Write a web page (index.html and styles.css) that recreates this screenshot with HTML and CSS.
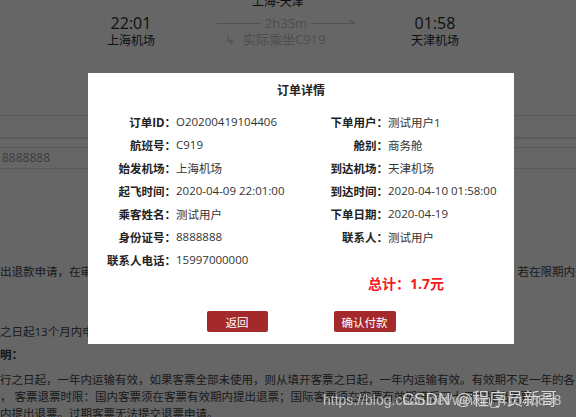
FILE: index.html
```html
<!DOCTYPE html>
<html lang="zh-CN">
<head>
  <meta charset="UTF-8">
  <meta name="viewport" content="width=device-width, initial-scale=1">
  <title>订单详情</title>
  <link rel="stylesheet" href="styles.css">
</head>
<body>
  <div class="page">
    <div class="flight">
      <div class="route">上海-天津</div>
      <div class="legs">
        <div class="stop">
          <div class="time">22:01</div>
          <div class="city">上海机场</div>
        </div>
        <div class="via">
          <div class="dur">
            <span class="ln"></span>
            <span class="dur-text">2h35m</span>
            <span class="ln ln-arrow"></span>
          </div>
          <div class="real"><span class="hook">↳</span>实际乘坐C919</div>
        </div>
        <div class="stop stop-end">
          <div class="time">01:58</div>
          <div class="city">天津机场</div>
        </div>
      </div>
    </div>

    <div class="rows">
      <div class="row"></div>
      <div class="row row-thick"></div>
      <div class="field">8888888</div>
    </div>

    <div class="notice">出退款申请，在审核通过后，票款将在七个工作日内按原支付渠道退回至您的账户中，请您注意查收，若在限期内则</div>
    <div class="notice notice-2">之日起13个月内申请退票。</div>
    <div class="notice-title">明：</div>
    <div class="para">
      <div class="line">行之日起，一年内运输有效，如果客票全部未使用，则从填开客票之日起，一年内运输有效。有效期不足一年的各</div>
      <div class="line">， 客票退票时限：国内客票须在客票有效期内提出退票；国际客票须在客票有效期满后三十日内提出退票。</div>
      <div class="line">内提出退票。过期客票无法提交退票申请。</div>
    </div>
  </div>

  <div class="mask"></div>

  <div class="modal">
    <div class="modal-title">订单详情</div>
    <div class="detail">
      <div class="lbl">订单ID：</div><div class="val">O20200419104406</div>
      <div class="lbl">下单用户：</div><div class="val">测试用户1</div>

      <div class="lbl">航班号：</div><div class="val">C919</div>
      <div class="lbl">舱别：</div><div class="val">商务舱</div>

      <div class="lbl">始发机场：</div><div class="val">上海机场</div>
      <div class="lbl">到达机场：</div><div class="val">天津机场</div>

      <div class="lbl">起飞时间：</div><div class="val">2020-04-09 22:01:00</div>
      <div class="lbl">到达时间：</div><div class="val">2020-04-10 01:58:00</div>

      <div class="lbl">乘客姓名：</div><div class="val">测试用户</div>
      <div class="lbl">下单日期：</div><div class="val">2020-04-19</div>

      <div class="lbl">身份证号：</div><div class="val">8888888</div>
      <div class="lbl">联系人：</div><div class="val">测试用户</div>

      <div class="lbl">联系人电话：</div><div class="val">15997000000</div>
    </div>
    <div class="total">总计：1.7元</div>
    <div class="actions">
      <button class="btn btn-back">返回</button>
      <button class="btn btn-pay">确认付款</button>
    </div>
  </div>

  <div class="watermark">
    <span class="wm-url">https://blog.csdn.net/weixin_41046858</span>
    <span class="wm-name">CSDN @程序员新哥</span>
  </div>
</body>
</html>
```

FILE: styles.css
```css
* {
  box-sizing: border-box;
}
body {
  margin: 0;
  width: 576px;
  height: 417px;
  overflow: hidden;
  background: #fff;
  font-family: "Open Sans", "Noto Sans CJK SC", sans-serif;
  font-size: 11.5px;
  color: #333;
}
.page {
  position: relative;
}

/* flight header behind the dialog */
.route {
  margin-top: -6px;
  padding-left: 252px;
  line-height: 16px;
  font-size: 12px;
  color: #222;
}
.legs {
  display: flex;
  align-items: flex-start;
  padding-left: 81px;
  margin-top: 2px;
}
.stop {
  width: 100px;
  text-align: center;
}
.stop-end {
  margin-left: 30px;
}
.time {
  font-size: 16px;
  line-height: 22px;
  color: #2a2a2a;
}
.city {
  font-size: 12px;
  line-height: 14px;
  color: #2a2a2a;
}
.via {
  width: 138px;
  margin-left: 36px;
}
.dur {
  display: flex;
  align-items: center;
  height: 22px;
}
.ln {
  flex: 1;
  height: 1px;
  background: #c8c8c8;
  position: relative;
}
.ln-arrow::after {
  content: "";
  position: absolute;
  right: 0;
  bottom: 0;
  width: 7px;
  height: 1px;
  background: #c8c8c8;
  transform-origin: right center;
  transform: rotate(30deg);
}
.dur-text {
  padding: 0 4px;
  font-size: 13px;
  color: #c4c4c4;
}
.real {
  margin-top: -2px;
  padding-left: 8px;
  line-height: 14px;
  font-size: 13px;
  color: #c4c4c4;
}
.hook {
  display: inline-block;
  width: 18px;
  font-size: 12px;
}

/* form rows */
.rows {
  margin-top: 46px;
}
.row {
  height: 22px;
  border-bottom: 1px solid #e0e0e0;
}
.row-thick {
  height: 23px;
  border-bottom: 2px solid #e0e0e0;
}
.field {
  margin-top: 8px;
  height: 22px;
  line-height: 20px;
  padding-left: 2px;
  border-top: 1px solid #e0e0e0;
  border-bottom: 1px solid #e0e0e0;
  color: #999;
  font-size: 12px;
}

.notice {
  margin-top: 94px;
  line-height: 18px;
  white-space: nowrap;
  color: #444;
}
.notice-2 {
  margin-top: 42px;
}
.notice-title {
  margin-top: 5px;
  line-height: 18px;
  font-weight: bold;
  color: #333;
}
.para {
  margin-top: 7px;
  color: #444;
}
.line {
  line-height: 17px;
  white-space: nowrap;
}

/* overlay + dialog */
.mask {
  position: fixed;
  inset: 0;
  background: rgba(0, 0, 0, 0.6);
}
.modal {
  position: absolute;
  left: 88px;
  top: 73px;
  width: 426px;
  height: 271px;
  padding: 6px 0 12px;
  background: #fff;
}
.modal-title {
  line-height: 23px;
  text-align: center;
  font-weight: bold;
  font-size: 12px;
  color: #222;
}
.detail {
  display: grid;
  grid-template-columns: 76px 124px 88px 1fr;
  grid-auto-rows: 23px;
  align-items: center;
  margin-top: 8px;
  padding-left: 12px;
}
.lbl {
  text-align: right;
  font-weight: bold;
  color: #222;
  white-space: nowrap;
}
.val {
  color: #333;
  white-space: nowrap;
}
.total {
  height: 26px;
  line-height: 26px;
  padding-left: 280px;
  font-size: 14px;
  font-weight: bold;
  color: #f5191e;
}
.actions {
  display: flex;
  justify-content: center;
  gap: 66px;
  margin-top: 14px;
}
.btn {
  height: 21px;
  padding: 0;
  border: none;
  border-radius: 2px;
  background: #a4292b;
  color: #fff;
  font-family: inherit;
  font-size: 11.5px;
  cursor: pointer;
}
.btn-back {
  width: 61px;
}
.btn-pay {
  width: 62px;
}

/* csdn watermark */
.watermark {
  position: absolute;
  left: 323px;
  top: 386px;
  width: 253px;
  height: 28px;
}
.wm-url {
  position: absolute;
  left: 0;
  top: 6px;
  font-family: "Liberation Sans", sans-serif;
  font-size: 14px;
  color: rgba(255, 255, 255, 0.6);
  white-space: nowrap;
}
.wm-name {
  position: absolute;
  left: 79px;
  top: 0;
  font-family: "Liberation Sans", "Noto Sans CJK SC", sans-serif;
  font-size: 17px;
  line-height: 28px;
  color: rgba(255, 255, 255, 0.8);
  text-shadow: 0 0 1px #333;
  white-space: nowrap;
}
```
